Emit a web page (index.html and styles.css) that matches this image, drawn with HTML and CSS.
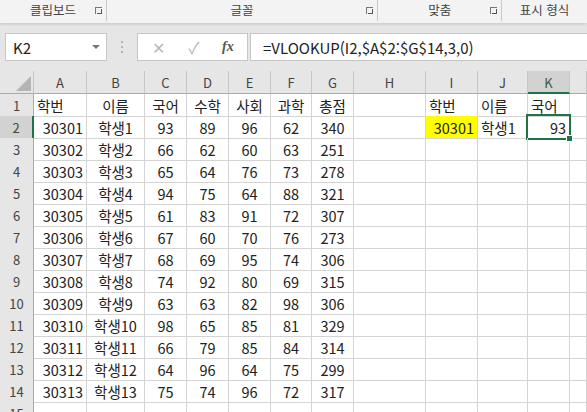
FILE: index.html
```html
<!DOCTYPE html>
<html lang="ko">
  <head>
    <meta charset="UTF-8" />
    <meta name="viewport" content="width=device-width, initial-scale=1.0" />
    <title>VLOOKUP</title>
    <link rel="stylesheet" href="styles.css">
  </head>

  <body>
    <div class="ribbon">
      <div class="group g-clip">클립보드<span class="launcher"></span></div>
      <div class="group g-font">글꼴<span class="launcher"></span></div>
      <div class="group g-align">맞춤<span class="launcher"></span></div>
      <div class="group g-num">표시 형식</div>
    </div>

    <div class="formula-area">
      <div class="name-box">
        <span>K2</span>
        <span class="arrow"></span>
      </div>
      <div class="dots"><i></i><i></i><i></i></div>
      <div class="fn-box">
        <span class="fn-icon">✕</span>
        <span class="fn-icon">✓</span>
        <span class="fx">fx</span>
      </div>
      <div class="formula">=VLOOKUP(I2,$A$2:$G$14,3,0)</div>
    </div>

    <div class="sheet">
      <div class="row head">
        <div class="corner"><span class="tri"></span></div>
        <div>A</div><div>B</div><div>C</div><div>D</div><div>E</div><div>F</div>
        <div>G</div><div>H</div><div>I</div><div>J</div><div class="sel-col">K</div><div></div>
      </div>
      <div class="row">
        <div class="rh">1</div>
        <div class="l">학번</div><div>이름</div><div>국어</div><div>수학</div><div>사회</div><div>과학</div>
        <div>총점</div><div></div><div class="l">학번</div><div class="l">이름</div><div class="l">국어</div><div></div>
      </div>
      <div class="row">
        <div class="rh sel-row">2</div>
        <div class="r">30301</div><div>학생1</div><div>93</div><div>89</div><div>96</div><div>62</div>
        <div>340</div><div></div><div class="r yellow">30301</div><div class="l">학생1</div>
        <div class="r active">93<span class="handle"></span></div><div></div>
      </div>
      <div class="row"><div class="rh">3</div><div class="r">30302</div><div>학생2</div><div>66</div><div>62</div><div>60</div><div>63</div><div>251</div><div></div><div></div><div></div><div></div><div></div></div>
      <div class="row"><div class="rh">4</div><div class="r">30303</div><div>학생3</div><div>65</div><div>64</div><div>76</div><div>73</div><div>278</div><div></div><div></div><div></div><div></div><div></div></div>
      <div class="row"><div class="rh">5</div><div class="r">30304</div><div>학생4</div><div>94</div><div>75</div><div>64</div><div>88</div><div>321</div><div></div><div></div><div></div><div></div><div></div></div>
      <div class="row"><div class="rh">6</div><div class="r">30305</div><div>학생5</div><div>61</div><div>83</div><div>91</div><div>72</div><div>307</div><div></div><div></div><div></div><div></div><div></div></div>
      <div class="row"><div class="rh">7</div><div class="r">30306</div><div>학생6</div><div>67</div><div>60</div><div>70</div><div>76</div><div>273</div><div></div><div></div><div></div><div></div><div></div></div>
      <div class="row"><div class="rh">8</div><div class="r">30307</div><div>학생7</div><div>68</div><div>69</div><div>95</div><div>74</div><div>306</div><div></div><div></div><div></div><div></div><div></div></div>
      <div class="row"><div class="rh">9</div><div class="r">30308</div><div>학생8</div><div>74</div><div>92</div><div>80</div><div>69</div><div>315</div><div></div><div></div><div></div><div></div><div></div></div>
      <div class="row"><div class="rh">10</div><div class="r">30309</div><div>학생9</div><div>63</div><div>63</div><div>82</div><div>98</div><div>306</div><div></div><div></div><div></div><div></div><div></div></div>
      <div class="row"><div class="rh">11</div><div class="r">30310</div><div>학생10</div><div>98</div><div>65</div><div>85</div><div>81</div><div>329</div><div></div><div></div><div></div><div></div><div></div></div>
      <div class="row"><div class="rh">12</div><div class="r">30311</div><div>학생11</div><div>66</div><div>79</div><div>85</div><div>84</div><div>314</div><div></div><div></div><div></div><div></div><div></div></div>
      <div class="row"><div class="rh">13</div><div class="r">30312</div><div>학생12</div><div>64</div><div>96</div><div>64</div><div>75</div><div>299</div><div></div><div></div><div></div><div></div><div></div></div>
      <div class="row"><div class="rh">14</div><div class="r">30313</div><div>학생13</div><div>75</div><div>74</div><div>96</div><div>72</div><div>317</div><div></div><div></div><div></div><div></div><div></div></div>
      <div class="row"><div class="rh">15</div><div></div><div></div><div></div><div></div><div></div><div></div><div></div><div></div><div></div><div></div><div></div><div></div></div>
    </div>
  </body>
</html>
```

FILE: styles.css
```css
body {
  margin: 0;
  width: 587px;
  height: 412px;
  overflow: hidden;
  background-color: #e6e6e6;
  font-family: "Noto Sans CJK KR", "Noto Sans", sans-serif;
  color: #222;
}

/* ribbon strip */
.ribbon {
  display: flex;
  height: 23px;
  background-color: #f3f3f3;
  box-shadow: 0 1px 3px rgba(0, 0, 0, 0.15);
  position: relative;
  z-index: 1;
  font-size: 12.5px;
  color: #444;
}

.group {
  position: relative;
  display: flex;
  justify-content: center;
  align-items: center;
  padding-bottom: 2px;
  border-right: 1px solid #c8c8c8;
  height: 19px;
}

.g-clip { width: 106px; }
.g-font { width: 271px; }
.g-align { width: 123px; }
.g-num { width: 85px; border-right: none; }

.launcher {
  position: absolute;
  right: 4px;
  top: 7px;
  width: 6px;
  height: 6px;
  border-left: 1px solid #777;
  border-top: 1px solid #777;
}

.launcher::after {
  content: "";
  position: absolute;
  left: 1px;
  top: 1px;
  width: 4px;
  height: 4px;
  border-right: 1px solid #555;
  border-bottom: 1px solid #555;
}

/* formula bar */
.formula-area {
  display: flex;
  align-items: center;
  height: 48px;
  padding-left: 5px;
}

.name-box,
.fn-box,
.formula {
  box-sizing: border-box;
  height: 28px;
  background-color: white;
  border: 1px solid #c6c6c6;
  display: flex;
  align-items: center;
}

.name-box {
  width: 102px;
  justify-content: space-between;
  padding: 0 6px 0 7px;
  font-size: 15px;
}

.arrow {
  width: 0;
  height: 0;
  border-left: 4px solid transparent;
  border-right: 4px solid transparent;
  border-top: 4px solid #777;
}

.dots {
  width: 30px;
  display: flex;
  flex-direction: column;
  align-items: center;
  gap: 3px;
}

.dots i {
  width: 2px;
  height: 2px;
  background-color: #b4b4b4;
}

.fn-box {
  width: 111px;
  padding-left: 12px;
  gap: 20px;
}

.fn-icon {
  color: #b8b8b8;
  font-size: 16px;
  width: 16px;
  text-align: center;
}

.fx {
  font-family: "Liberation Serif", serif;
  font-style: italic;
  font-weight: bold;
  color: #555;
  font-size: 14px;
}

.formula {
  flex: 1;
  margin-left: 2px;
  padding-left: 12px;
  border-right: none;
  font-size: 15px;
  color: #222;
}

/* grid */
.sheet {
  background-color: white;
  font-size: 14.5px;
}

.row {
  display: grid;
  grid-template-columns: 34px 53px 58px 42px 42px 42px 41px 42px 72px 52px 50px 42px 1fr;
  height: 22px;
}

.row > div {
  box-sizing: border-box;
  border-right: 1px solid #d4d4d4;
  border-bottom: 1px solid #d4d4d4;
  display: flex;
  align-items: center;
  justify-content: center;
  padding: 1px 3px 0;
  white-space: nowrap;
  position: relative;
}

.row > .l { justify-content: flex-start; }
.row > .r { justify-content: flex-end; }

.head {
  height: 23px;
  background-color: #e6e6e6;
}

.head > div {
  border-right-color: #c6c6c6;
  border-bottom-color: #ababab;
  font-size: 13px;
  color: #444;
}

.corner { overflow: hidden; }

.tri {
  position: absolute;
  right: 2px;
  bottom: 2px;
  width: 0;
  height: 0;
  border-left: 15px solid transparent;
  border-bottom: 15px solid #b4b4b4;
}

.row > .rh {
  background-color: #e6e6e6;
  border-right-color: #ababab;
  border-bottom-color: #c6c6c6;
  font-size: 13px;
  color: #444;
}

.row > .sel-row {
  background-color: #d2d2d2;
  border-right: 2px solid #217346;
}

.head > .sel-col {
  background-color: #d2d2d2;
  border-bottom: 2px solid #217346;
  color: #3d5a40;
}

.yellow { background-color: #ffff00; }

.active::before {
  content: "";
  position: absolute;
  left: -2px;
  top: -2px;
  right: -2px;
  bottom: -2px;
  border: 2px solid #217346;
}

.handle {
  position: absolute;
  right: -4px;
  bottom: -4px;
  width: 5px;
  height: 5px;
  background-color: #217346;
  border: 1px solid white;
  z-index: 2;
}
```
